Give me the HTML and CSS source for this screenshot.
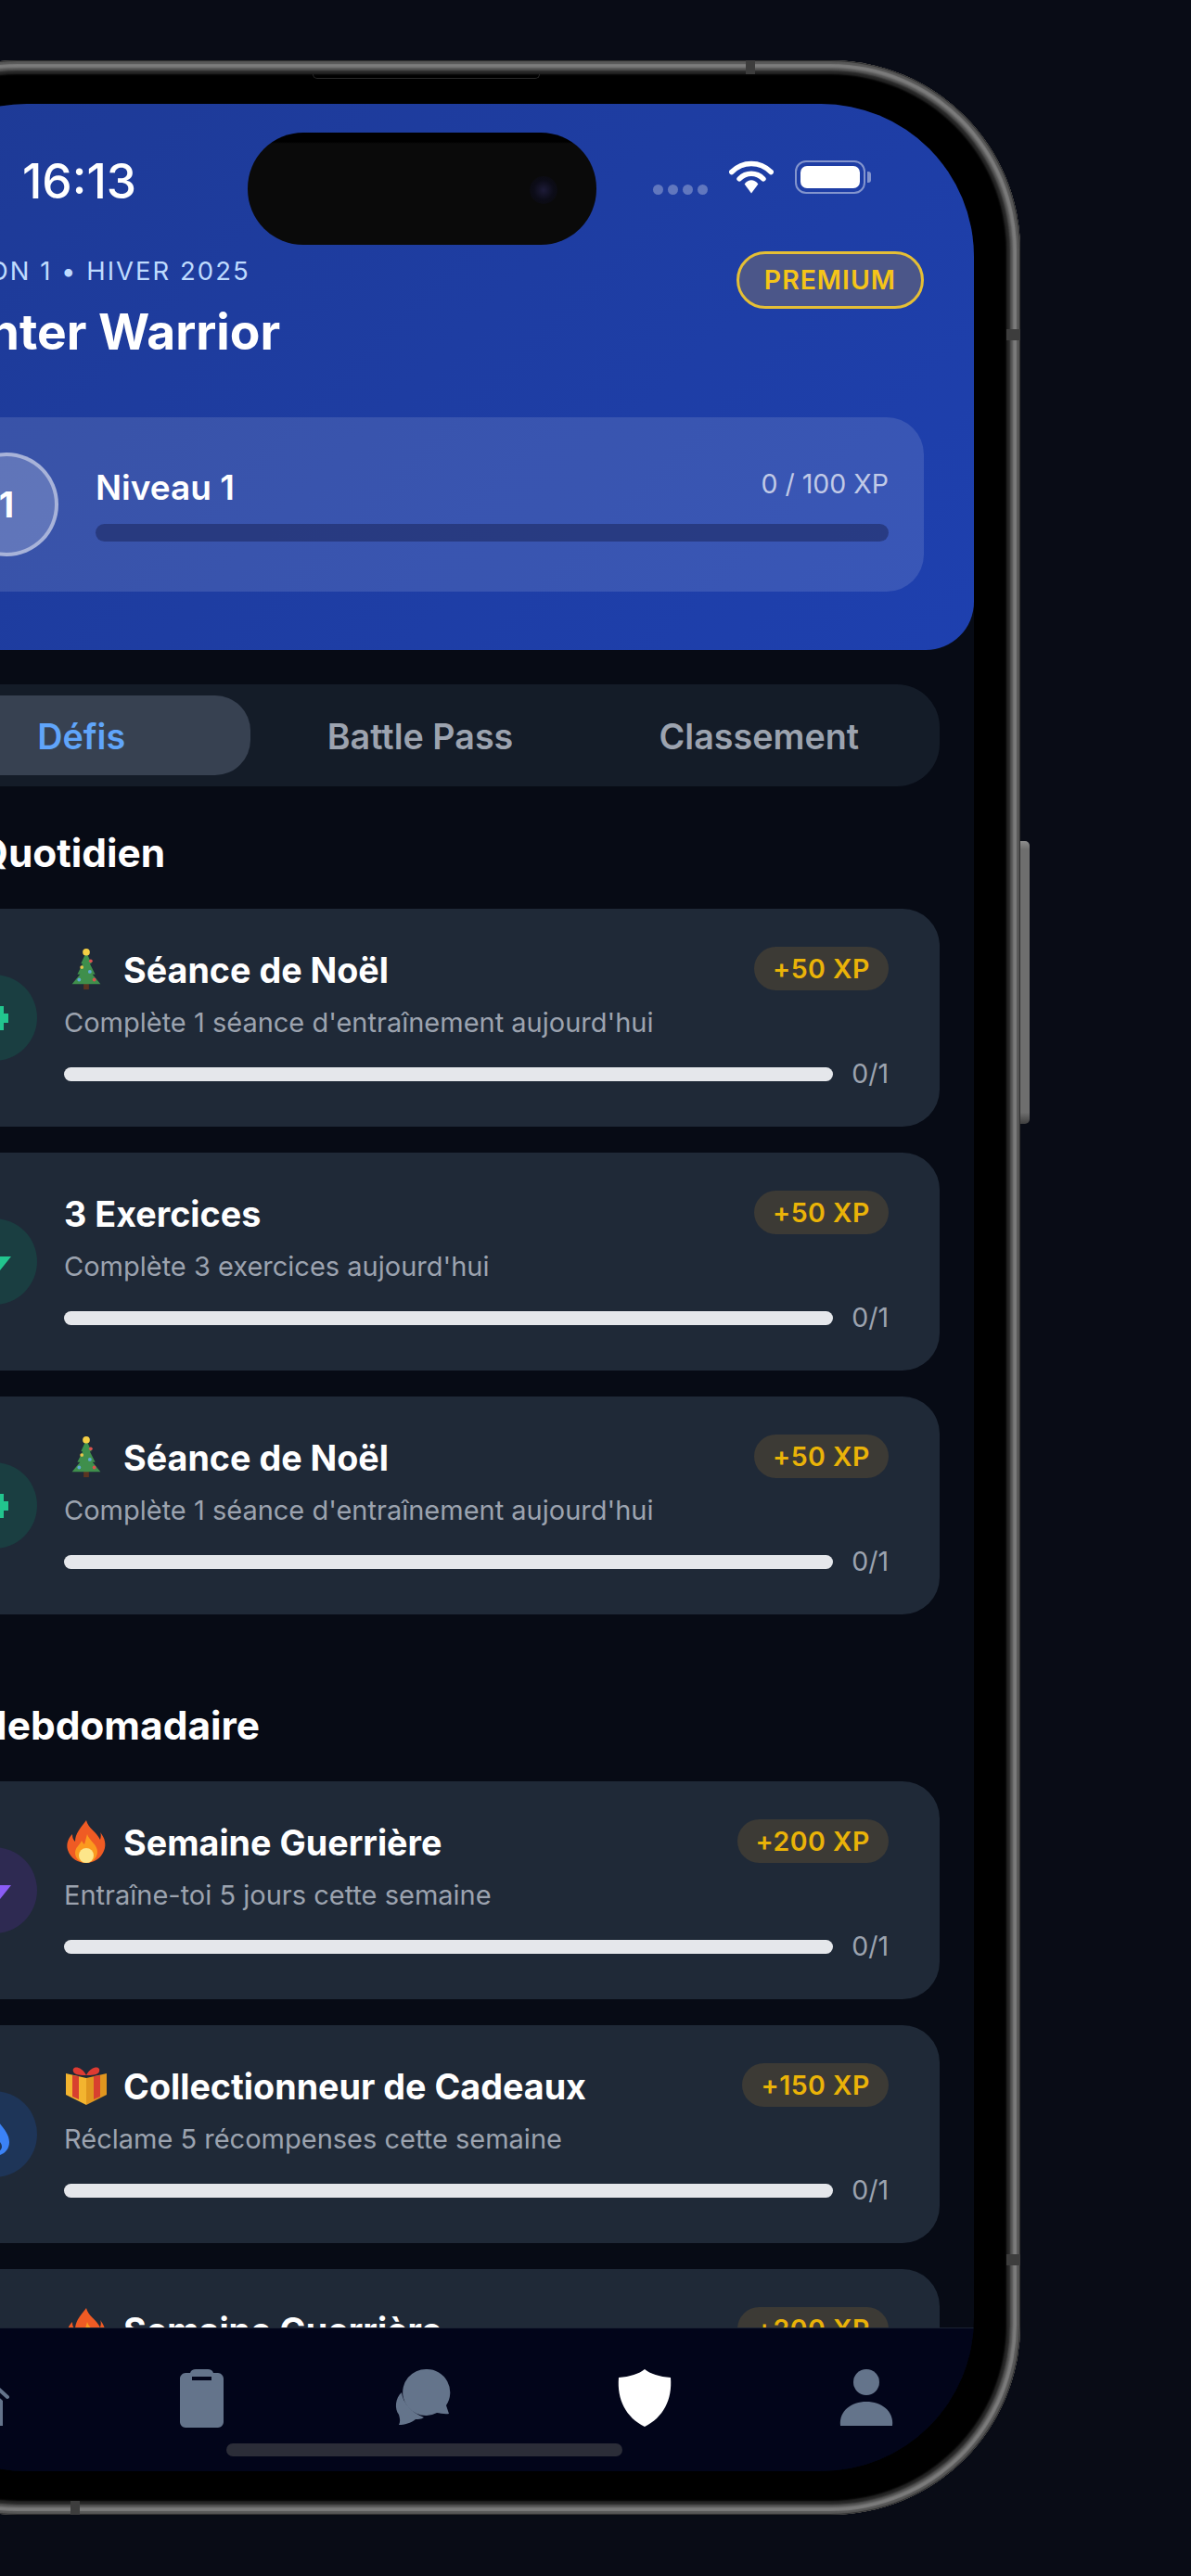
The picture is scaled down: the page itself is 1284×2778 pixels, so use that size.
FILE: index.html
```html
<!DOCTYPE html>
<html lang="fr">
<head>
	<meta charset="utf-8">
	<title>Winter Warrior</title>
	<link rel="stylesheet" href="styles.css">
</head>
<body>
<div class="phone">
	<span class="speaker"></span>
	<span class="side-button"></span>
	<span class="band band-top"></span>
	<span class="band band-right"></span>
	<span class="band band-right-low"></span>
	<span class="band band-bottom"></span>

	<div class="screen">
		<div class="island"><span class="lens"></span></div>

		<header class="hero">
			<div class="status">
				<span class="time">16:13</span>
				<div class="status-icons">
					<div class="signal"><i></i><i></i><i></i><i></i></div>
					<svg class="wifi" viewBox="0 0 52 40">
						<path d="M3 14C16 1 36 1 49 14" fill="none" stroke="#fff" stroke-width="6" stroke-linecap="round"/>
						<path d="M12 22C20 14 32 14 40 22" fill="none" stroke="#fff" stroke-width="6" stroke-linecap="round"/>
						<path d="M18 28C23 22 29 22 34 28L26 39Z" fill="#fff"/>
					</svg>
					<div class="battery"><span class="battery-fill"></span></div>
					<span class="battery-tip"></span>
				</div>
			</div>

			<div class="hero-top">
				<div>
					<div class="season">SAISON 1 • HIVER 2025</div>
					<h1 class="hero-title">Winter Warrior</h1>
				</div>
				<div class="premium">PREMIUM</div>
			</div>

			<div class="level">
				<div class="level-badge">1</div>
				<div class="level-info">
					<div class="level-row">
						<span class="level-name">Niveau 1</span>
						<span class="level-xp">0 / 100 XP</span>
					</div>
					<div class="level-bar"></div>
				</div>
			</div>
		</header>

		<main class="content">
			<div class="tabs">
				<div class="tab active">Défis</div>
				<div class="tab">Battle Pass</div>
				<div class="tab">Classement</div>
			</div>

			<h2 class="section">Quotidien</h2>
			<div class="cards">
				<div class="card">
					<div class="card-icon green"><svg viewBox="0 0 48 48"><path d="M15 9h8v6h4v-4h7v8h5v10h-5v8h-7v-4h-4v6h-8v-6h-5V15h5z" fill="#22c58e"/></svg></div>
					<div class="card-body">
						<div class="card-head">
							<div class="card-title">
								<svg class="emoji" viewBox="0 0 40 50">
									<rect x="17" y="41" width="6" height="7" fill="#5b3420"/>
									<path d="M20 6L26 19H24L30 31H27L36 42H4L13 31H10L16 19H14Z" fill="#3f8f4c"/>
									<circle cx="20" cy="6" r="4" fill="#f5cf45"/>
									<circle cx="25" cy="16" r="2" fill="#d9534f"/>
									<circle cx="15" cy="23" r="2" fill="#e5c64a"/>
									<circle cx="24" cy="28" r="2" fill="#5fa8d3"/>
									<circle cx="12" cy="37" r="2" fill="#5fa8d3"/>
									<circle cx="29" cy="37" r="2" fill="#d9534f"/>
								</svg>
								<span class="title-text">Séance de Noël</span>
							</div>
							<span class="xp">+50 XP</span>
						</div>
						<p class="card-text">Complète 1 séance d'entraînement aujourd'hui</p>
						<div class="progress"><div class="progress-bar"></div><span class="count">0/1</span></div>
					</div>
				</div>

				<div class="card">
					<div class="card-icon green"><svg viewBox="0 0 48 48"><path d="M29 0L6 28H22L18 48L42 18H26Z" fill="#22c58e"/></svg></div>
					<div class="card-body">
						<div class="card-head">
							<div class="card-title"><span class="title-text">3 Exercices</span></div>
							<span class="xp">+50 XP</span>
						</div>
						<p class="card-text">Complète 3 exercices aujourd'hui</p>
						<div class="progress"><div class="progress-bar"></div><span class="count">0/1</span></div>
					</div>
				</div>

				<div class="card">
					<div class="card-icon green"><svg viewBox="0 0 48 48"><path d="M15 9h8v6h4v-4h7v8h5v10h-5v8h-7v-4h-4v6h-8v-6h-5V15h5z" fill="#22c58e"/></svg></div>
					<div class="card-body">
						<div class="card-head">
							<div class="card-title">
								<svg class="emoji" viewBox="0 0 40 50">
									<rect x="17" y="41" width="6" height="7" fill="#5b3420"/>
									<path d="M20 6L26 19H24L30 31H27L36 42H4L13 31H10L16 19H14Z" fill="#3f8f4c"/>
									<circle cx="20" cy="6" r="4" fill="#f5cf45"/>
									<circle cx="25" cy="16" r="2" fill="#d9534f"/>
									<circle cx="15" cy="23" r="2" fill="#e5c64a"/>
									<circle cx="24" cy="28" r="2" fill="#5fa8d3"/>
									<circle cx="12" cy="37" r="2" fill="#5fa8d3"/>
									<circle cx="29" cy="37" r="2" fill="#d9534f"/>
								</svg>
								<span class="title-text">Séance de Noël</span>
							</div>
							<span class="xp">+50 XP</span>
						</div>
						<p class="card-text">Complète 1 séance d'entraînement aujourd'hui</p>
						<div class="progress"><div class="progress-bar"></div><span class="count">0/1</span></div>
					</div>
				</div>
			</div>

			<h2 class="section section-next">Hebdomadaire</h2>
			<div class="cards">
				<div class="card">
					<div class="card-icon purple"><svg viewBox="0 0 48 48"><path d="M29 0L6 28H22L18 48L42 18H26Z" fill="#8b5cf6"/></svg></div>
					<div class="card-body">
						<div class="card-head">
							<div class="card-title">
								<svg class="emoji" viewBox="0 0 44 48">
									<path d="M22 1C24 10 33 13 37 22C38 18 38 16 37 14C42 20 44 27 41 34C38 42 30 47 22 47C13 47 5 42 2 33C0 26 3 20 7 16C7 20 8 22 10 24C10 15 16 9 22 1Z" fill="#ef5b24"/>
									<path d="M23 16C25 23 34 27 34 35C34 42 28 47 22 47C15 47 10 42 10 36C10 30 15 28 17 23C18 25 19 26 20 27C21 23 22 20 23 16Z" fill="#fb9a1e"/>
									<ellipse cx="22" cy="39" rx="8" ry="8" fill="#fde68a"/>
								</svg>
								<span class="title-text">Semaine Guerrière</span>
							</div>
							<span class="xp">+200 XP</span>
						</div>
						<p class="card-text">Entraîne-toi 5 jours cette semaine</p>
						<div class="progress"><div class="progress-bar"></div><span class="count">0/1</span></div>
					</div>
				</div>

				<div class="card">
					<div class="card-icon blue"><svg viewBox="0 0 48 48"><path d="M24 2C27 12 40 20 40 32C40 41 33 47 24 47C15 47 8 41 8 32C8 20 21 12 24 2ZM24 24C21 30 16 32 16 37C16 41 20 43 24 43C28 43 32 41 32 37C32 32 27 30 24 24Z" fill="#3b82f6" fill-rule="evenodd"/></svg></div>
					<div class="card-body">
						<div class="card-head">
							<div class="card-title">
								<svg class="emoji" viewBox="0 0 48 44">
									<path d="M24 14L46 9V32L24 43Z" fill="#e0961f"/>
									<path d="M24 14L2 9V32L24 43Z" fill="#f3b42f"/>
									<path d="M9 11L16 12V37L9 34ZM32 12L39 11V34L32 37Z" fill="#d8402f"/>
									<path d="M24 11C18 0 8 1 10 7C11 11 19 11 24 11C29 11 37 11 38 7C40 1 30 0 24 11Z" fill="#dd3b32"/>
								</svg>
								<span class="title-text">Collectionneur de Cadeaux</span>
							</div>
							<span class="xp">+150 XP</span>
						</div>
						<p class="card-text">Réclame 5 récompenses cette semaine</p>
						<div class="progress"><div class="progress-bar"></div><span class="count">0/1</span></div>
					</div>
				</div>

				<div class="card">
					<div class="card-icon purple"><svg viewBox="0 0 48 48"><path d="M29 0L6 28H22L18 48L42 18H26Z" fill="#8b5cf6"/></svg></div>
					<div class="card-body">
						<div class="card-head">
							<div class="card-title">
								<svg class="emoji" viewBox="0 0 44 48">
									<path d="M22 1C24 10 33 13 37 22C38 18 38 16 37 14C42 20 44 27 41 34C38 42 30 47 22 47C13 47 5 42 2 33C0 26 3 20 7 16C7 20 8 22 10 24C10 15 16 9 22 1Z" fill="#ef5b24"/>
									<path d="M23 16C25 23 34 27 34 35C34 42 28 47 22 47C15 47 10 42 10 36C10 30 15 28 17 23C18 25 19 26 20 27C21 23 22 20 23 16Z" fill="#fb9a1e"/>
									<ellipse cx="22" cy="39" rx="8" ry="8" fill="#fde68a"/>
								</svg>
								<span class="title-text">Semaine Guerrière</span>
							</div>
							<span class="xp">+200 XP</span>
						</div>
						<p class="card-text">Entraîne-toi 5 jours cette semaine</p>
						<div class="progress"><div class="progress-bar"></div><span class="count">0/1</span></div>
					</div>
				</div>
			</div>
		</main>

		<nav class="nav">
			<div class="nav-icons">
				<div class="nav-item">
					<svg viewBox="0 0 64 64">
						<path d="M32 4L62 31" fill="none" stroke="#64748b" stroke-width="4" stroke-linecap="round"/>
						<path d="M2 31L32 4" fill="none" stroke="#64748b" stroke-width="4" stroke-linecap="round"/>
						<path d="M32 13L57 35V62H7V35Z" fill="#64748b"/>
					</svg>
				</div>
				<div class="nav-item">
					<svg viewBox="0 0 64 64"><path d="M15 5H20C21 2 23 1 26 1H39C42 1 44 2 45 5H50C53 5 56 8 56 11V58C56 61 53 64 50 64H15C12 64 9 61 9 58V11C9 8 12 5 15 5ZM22 9V13H43V9Z" fill="#64748b" fill-rule="evenodd"/></svg>
				</div>
				<div class="nav-item">
					<svg viewBox="0 0 64 64">
						<path d="M36 1A25 25 0 0 1 57 40L60 49C55 50 50 48 47 48A25 25 0 1 1 36 1Z" fill="#64748b"/>
						<path d="M9 26C10 37 20 48 33 53C30 55 27 55 24 55C19 59 12 61 6 61C8 57 7 54 6 50C1 44 2 32 9 26Z" fill="#64748b"/>
					</svg>
				</div>
				<div class="nav-item">
					<svg viewBox="0 0 64 64"><path d="M32 1C38 6 48 9 60 10C62 34 52 53 32 63C12 53 2 34 4 10C16 9 26 6 32 1Z" fill="#fff"/></svg>
				</div>
				<div class="nav-item">
					<svg viewBox="0 0 64 64">
						<circle cx="32" cy="15" r="14" fill="#64748b"/>
						<path d="M4 62C2 46 16 36 32 36C48 36 62 46 60 62Z" fill="#64748b"/>
					</svg>
				</div>
			</div>
			<div class="home-bar"></div>
		</nav>
	</div>
</div>
</body>
</html>
```
FILE: styles.css
```css
html, body {
	margin: 0;
	height: 2778px;
	overflow: hidden;
	background: #090c16;
	font-family: Inter, "Liberation Sans", sans-serif;
}

/* device */
.phone {
	position: relative;
	width: 1286px;
	height: 2647px;
	margin: 65px 0 0 -186px;
	padding: 47px 50px;
	box-sizing: border-box;
	border-radius: 205px;
	background: #000;
	box-shadow:
		inset 0 0 1px 1px #2e2e2e,
		inset 0 0 1px 4px #585858,
		inset 0 0 2px 8px #7c7c7c,
		inset 0 0 2px 11px #565656,
		inset 0 0 2px 15px #262626;
}
.speaker {
	position: absolute;
	left: 523px;
	top: 15px;
	width: 243px;
	height: 4px;
	border-radius: 0 0 8px 8px;
	border: 1px solid #2a2a2a;
	border-top: 0;
}
.side-button {
	position: absolute;
	right: -10px;
	top: 842px;
	width: 10px;
	height: 305px;
	border-radius: 0 5px 5px 0;
	background: linear-gradient(#8e8e8e, #6e6e6e 3%, #6e6e6e 96%, #3f3f3f);
}
.band {
	position: absolute;
	background: #3d3d3d;
}
.band-top { left: 990px; top: 0; width: 10px; height: 15px; }
.band-right { right: 0; top: 290px; width: 15px; height: 12px; }
.band-right-low { right: 0; top: 2366px; width: 15px; height: 12px; }
.band-bottom { left: 262px; bottom: 0; width: 10px; height: 15px; }

.screen {
	position: relative;
	display: flex;
	flex-direction: column;
	height: 2553px;
	overflow: hidden;
	border-radius: 165px;
	background: #070b15;
	color: #fff;
}
.island {
	position: absolute;
	left: 403px;
	top: 31px;
	width: 376px;
	height: 121px;
	border-radius: 60px;
	background: linear-gradient(#000 10px, #0a0a0a 12px);
}
.lens {
	position: absolute;
	right: 42px;
	top: 47px;
	width: 30px;
	height: 30px;
	border-radius: 50%;
	background: radial-gradient(circle, #1d1b38 0, #0c0c18 50%, #0a0a0a 100%);
}

/* header */
.hero {
	flex: none;
	height: 589px;
	padding: 0 54px;
	box-sizing: border-box;
	border-radius: 0 0 52px 52px;
	background: linear-gradient(135deg, #1e3a95, #1e40af);
}
.status {
	display: flex;
	justify-content: space-between;
	align-items: center;
	height: 65px;
	padding: 50px 57px 0 106px;
}
.time {
	font-size: 51.5px;
	font-weight: 500;
}
.status-icons {
	display: flex;
	align-items: center;
	margin-top: -7px;
}
.signal {
	display: flex;
	gap: 5px;
	margin: 26px 23px 0 0;
}
.signal i {
	width: 11px;
	height: 11px;
	border-radius: 50%;
	background: rgba(255, 255, 255, 0.3);
}
.wifi {
	width: 48px;
	height: 38px;
	margin-right: 23px;
}
.battery {
	box-sizing: border-box;
	width: 76px;
	height: 36px;
	padding: 4px;
	border: 2px solid rgba(255, 255, 255, 0.45);
	border-radius: 12px;
}
.battery-fill {
	display: block;
	height: 100%;
	border-radius: 7px;
	background: #fff;
}
.battery-tip {
	width: 4px;
	height: 12px;
	margin-left: 2px;
	border-radius: 0 3px 3px 0;
	background: rgba(255, 255, 255, 0.45);
}

.hero-top {
	display: flex;
	justify-content: space-between;
	align-items: flex-start;
	margin-top: 44px;
}
.season {
	margin-top: 6px;
	font-size: 27.5px;
	letter-spacing: 2px;
	line-height: 30px;
	color: #bfdbfe;
}
.hero-title {
	margin: 20px 0 0;
	font-size: 53.3px;
	font-weight: 700;
	line-height: 62px;
}
.premium {
	box-sizing: border-box;
	height: 62px;
	padding: 0 27px;
	border: 3px solid #e5bf35;
	border-radius: 31px;
	background: #4b5689;
	color: #f5c518;
	font-size: 28.4px;
	font-weight: 600;
	letter-spacing: 1px;
	line-height: 56px;
}

.level {
	display: flex;
	align-items: center;
	gap: 40px;
	box-sizing: border-box;
	height: 188px;
	margin-top: 61px;
	padding: 0 38px 0 33px;
	border-radius: 40px;
	background: rgba(255, 255, 255, 0.12);
}
.level-badge {
	flex: none;
	box-sizing: border-box;
	width: 112px;
	height: 112px;
	border: 4px solid rgba(255, 255, 255, 0.45);
	border-radius: 50%;
	background: rgba(255, 255, 255, 0.2);
	font-size: 38px;
	font-weight: 700;
	line-height: 104px;
	text-align: center;
}
.level-info {
	flex: 1;
}
.level-row {
	display: flex;
	justify-content: space-between;
	align-items: flex-start;
}
.level-name {
	font-size: 37px;
	font-weight: 600;
	line-height: 44px;
}
.level-xp {
	font-size: 28.5px;
	line-height: 36px;
	color: rgba(255, 255, 255, 0.7);
}
.level-bar {
	height: 19px;
	margin-top: 17px;
	border-radius: 10px;
	background: rgba(30, 41, 99, 0.6);
}

/* challenges */
.content {
	flex: 1;
	min-height: 0;
	overflow: hidden;
	padding: 37px 37px 0;
}
.tabs {
	display: flex;
	box-sizing: border-box;
	height: 110px;
	margin-left: -8px;
	padding: 12px;
	border-radius: 46px;
	background: #141c28;
}
.tab {
	flex: 1;
	border-radius: 38px;
	color: #9ca3af;
	font-size: 37.7px;
	font-weight: 600;
	line-height: 88px;
	text-align: center;
}
.tab.active {
	background: #374151;
	color: #60a5fa;
}
.section {
	margin: 48px 0 36px;
	padding-left: 75px;
	font-size: 42.4px;
	font-weight: 700;
	line-height: 48px;
}
.section-next {
	margin-top: 96px;
}
.cards {
	display: flex;
	flex-direction: column;
	gap: 28px;
}
.card {
	flex: none;
	display: flex;
	align-items: center;
	gap: 29px;
	box-sizing: border-box;
	height: 235px;
	padding: 0 55px 0 46px;
	border-radius: 40px;
	background: #1f2937;
}
.card-icon {
	flex: none;
	display: flex;
	justify-content: center;
	align-items: center;
	width: 93px;
	height: 93px;
	border-radius: 50%;
}
.card-icon svg {
	width: 48px;
	height: 48px;
}
.green { background: #1a3e41; }
.purple { background: #2e2a52; }
.blue { background: #1e3558; }
.card-body {
	flex: 1;
	min-width: 0;
}
.card-head {
	display: flex;
	justify-content: space-between;
	align-items: center;
	height: 47px;
}
.card-title {
	display: flex;
	align-items: center;
	gap: 16px;
	font-size: 37.7px;
	font-weight: 700;
}
.title-text {
	padding-top: 3px;
}
.emoji {
	width: 48px;
	height: 48px;
}
.xp {
	padding: 0 20px;
	border-radius: 24px;
	background: #3c3a35;
	color: #eab308;
	font-size: 28.5px;
	font-weight: 600;
	letter-spacing: 0.5px;
	line-height: 47px;
}
.card-text {
	margin: 18px 0 0;
	color: #9ca3af;
	font-size: 29px;
	line-height: 34px;
}
.progress {
	display: flex;
	align-items: center;
	gap: 20px;
	margin-top: 22px;
}
.progress-bar {
	flex: 1;
	height: 15px;
	border-radius: 8px;
	background: #e5e7eb;
}
.count {
	color: #9ca3af;
	font-size: 28.5px;
	line-height: 32px;
}

/* bottom nav */
.nav {
	flex: none;
	height: 155px;
	box-sizing: border-box;
	padding-top: 42px;
	border-top: 1px solid #1b2333;
	background: #02051a;
}
.nav-icons {
	display: flex;
	height: 65px;
	margin: 0 -4px 0 -6px;
}
.nav-item {
	flex: 1;
	display: flex;
	justify-content: center;
	align-items: center;
}
.nav-item svg {
	width: 64px;
	height: 64px;
}
.home-bar {
	width: 427px;
	height: 14px;
	margin: 17px auto 0;
	border-radius: 7px;
	background: #2b2d38;
}
```
